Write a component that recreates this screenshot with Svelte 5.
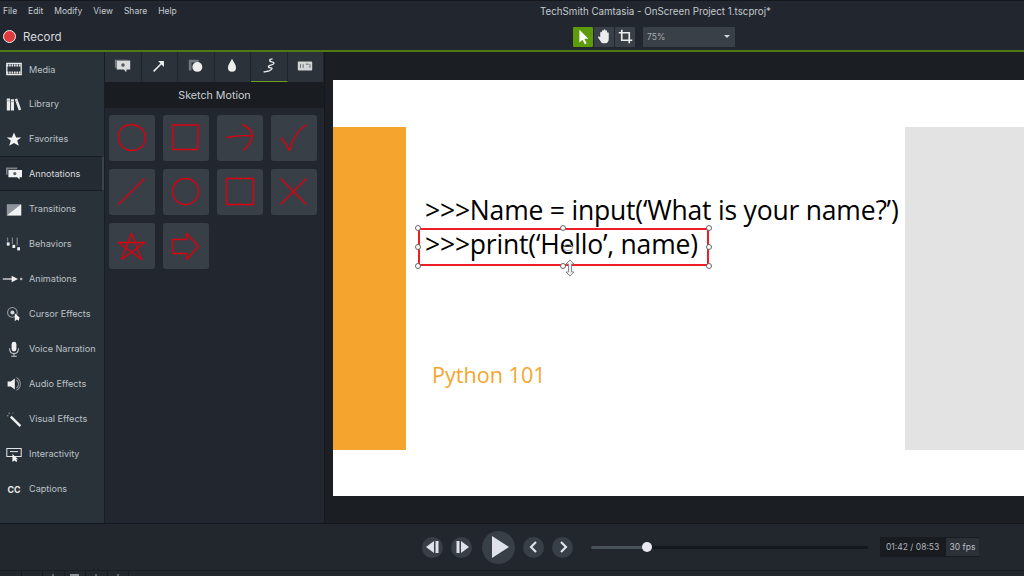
<script>
  const menu = ['File', 'Edit', 'Modify', 'View', 'Share', 'Help'];
  const side = [
    ['Media', 'media'], ['Library', 'library'], ['Favorites', 'star'], ['Annotations', 'annot'],
    ['Transitions', 'trans'], ['Behaviors', 'behav'], ['Animations', 'anim'], ['Cursor Effects', 'cursor'],
    ['Voice Narration', 'mic'], ['Audio Effects', 'audio'], ['Visual Effects', 'wand'], ['Interactivity', 'inter'], ['Captions', 'cc']
  ];
  const tabs = ['annot', 'arrow', 'shape', 'drop', 'sketch', 'key'];
  const tiles = [
    'M15 6C9 7 5.500 12 5.500 18c0 8 6 13.500 13 13.500 8 0 14-5 14-13 0-7-6-12-13-13-1 0-3 0-4 1',
    'M5.500 6H31.500L30.500 30.500H6Z',
    'M5.500 18.500C13 17 22 16 30.500 17M21.500 5.500C27 8 31 12 31.500 17 31 23 26 28 22.500 31.500',
    'M5.500 18.500C9 22 12 26 14.500 31.500 17 21 23 11 31.500 5.500',
    'M5.500 31.500L31.500 5.500',
    'M31.500 18.500A13 13 0 1 1 5.500 18.500A13 13 0 1 1 31.500 18.500Z',
    'M5.500 5.500H32.500V31.500H5.500Z',
    'M5.500 5.500L31.500 31.500M31.500 5.500L5.500 31.500',
    'M8.500 32.500L18.500 6.500L28.500 32.500L5.500 15.500H32L8.500 32.500',
    'M5.500 12.500H19.500V6.500L31.500 19.500L19.500 32.500V26.500H5.500Z'
  ];
  const stripMarks = [0, 0, 1, 2, 1, 1];
</script>

{#snippet icon(n)}
  <svg class="ico" viewBox="0 0 24 20">
    {#if n === 'media'}
      <path d="M3 3H21V17H3Z" fill="none" stroke="#e8eaec" stroke-width="1.600"/><path d="M3 5.500H21M3 14.500H21" stroke="#e8eaec" stroke-width="2.600" stroke-dasharray="2 1"/>
    {:else if n === 'library'}
      <path d="M3 3H7V18H3ZM8 4H12V18H8ZM13 4L16 3L21 17L18 18Z" fill="#e8eaec"/><path d="M3 6H7M8 7H12M13.500 7L16.500 6" stroke="#8f959b" stroke-width="1"/>
    {:else if n === 'star'}
      <path d="M12 2L14.600 8H21L16 12L18 18.500L12 15L6 18.500L8 12L3 8H9.400Z" fill="#f2f3f4"/>
    {:else if n === 'annot'}
      <path d="M2 2H16V4H4V11H2Z" fill="#7b8288"/><path d="M5 5H22V14H19V17L16 14H5Z" fill="#f0f1f2"/><circle cx="13" cy="9.500" r="2" fill="#5a6168"/>
    {:else if n === 'trans'}
      <path d="M3 4H21V18H3Z" fill="#8f959b"/><path d="M3 18L21 4V18Z" fill="#f0f1f2"/>
    {:else if n === 'behav'}
      <path d="M4 2V7M10 2V10M16 2V12" stroke="#7a828a" stroke-width="1.500"/><rect x="3" y="8" width="3.500" height="4" fill="#eee"/><rect x="10" y="11" width="3.500" height="4" fill="#eee"/><rect x="16" y="14" width="3.500" height="4" fill="#eee"/>
    {:else if n === 'anim'}
      <path d="M-2 10H11" stroke="#eee" stroke-width="1.500"/><path d="M9 6L17 10L9 14Z" fill="#eee"/><circle cx="21" cy="10" r="1.600" fill="#b8bcc0"/>
    {:else if n === 'cursor'}
      <circle cx="10" cy="8" r="6" fill="none" stroke="#9aa0a6" stroke-width="1.300"/><circle cx="10" cy="8" r="2.500" fill="#d5d7d9"/><path d="M13 9L13 19L15.500 17L18 18.500L18.500 16L19 14.500Z" fill="#f0f1f2"/>
    {:else if n === 'mic'}
      <rect x="9" y="1" width="6" height="12" rx="3" fill="#f0f1f2"/><path d="M6.500 9C6.500 18 17.500 18 17.500 9M12 15V19M8.500 19H15.500" fill="none" stroke="#c5c8cb" stroke-width="1.300"/>
    {:else if n === 'audio'}
      <path d="M4 7H8L13 3V17L8 13H4Z" fill="#f0f1f2"/><path d="M15 5A6 6 0 0 1 15 15M15 2A9 9 0 0 1 15 18" fill="none" stroke="#8f959b" stroke-width="1.300"/>
    {:else if n === 'wand'}
      <path d="M8 7L20 19" stroke="#f0f1f2" stroke-width="3"/><path d="M6 2V4M11 2L10 3M3 6H5" stroke="#b8bcc0" stroke-width="1"/>
    {:else if n === 'inter'}
      <path d="M3 3H21V13H3Z" fill="none" stroke="#e0e2e4" stroke-width="1.300"/><path d="M7 7H17" stroke="#e0e2e4" stroke-width="1.300"/><path d="M10 10L10 20L12.500 18L15 20L16 18.500L14.500 16.500H17Z" fill="#f5f5f5"/>
    {:else if n === 'cc'}
      <text x="12" y="15" text-anchor="middle" class="cc">CC</text>
    {/if}
  </svg>
{/snippet}

{#snippet tab(n)}
  <svg class="tabico" viewBox="0 0 20 20">
    {#if n === 'annot'}
      <path d="M3 4H18V14H14L13.500 17L11 14H3Z" fill="#d9dbdd"/><path d="M1 3H15V4H3V12H1Z" fill="#7b8288"/><circle cx="10" cy="9" r="2" fill="#565d63"/>
    {:else if n === 'arrow'}
      <path d="M4 16L13 7" stroke="#eceded" stroke-width="1.700"/><path d="M9 4.500H15.500V11Z" fill="#eceded"/>
    {:else if n === 'shape'}
      <path d="M2 3H13V6H5V15H2Z" fill="#737a80"/><circle cx="11.500" cy="11" r="5.500" fill="#eceded"/>
    {:else if n === 'drop'}
      <path d="M10 2C12 6 14.500 8.500 14.500 12A4.500 4.500 0 0 1 5.500 12C5.500 8.500 8 6 10 2Z" fill="#eceded"/>
    {:else if n === 'sketch'}
      <path d="M14 2C10 2 10 5 13 5.500C17 6 16 8 12 9C8 10 9 12 12 12C14 12 14 14 10 15.500C7 16.500 5 16 4 17" fill="none" stroke="#eceded" stroke-width="1.500"/>
    {:else if n === 'key'}
      <rect x="2" y="5" width="16" height="10" rx="1" fill="#d2d4d6"/><path d="M5 8V12M8 8V12M11 8H14M15.500 8V12" stroke="#596067" stroke-width="1"/>
    {/if}
  </svg>
{/snippet}

<div class="app">
  <header class="head">
    <div class="menurow">
      <nav class="menu">
        {#each menu as m}<span>{m}</span>{/each}
      </nav>
      <div class="title">TechSmith Camtasia - OnScreen Project 1.tscproj*</div>
    </div>
    <div class="toolrow">
      <div class="record"><i class="dot"></i><span>Record</span></div>
      <div class="tools">
        <button class="tool on" aria-label="Select">
          <svg viewBox="0 0 20 20" width="18" height="18"><path d="M6 2V16L9.500 13L12 18L14 17L11.500 12H16Z" fill="#fff"/></svg>
        </button>
        <button class="tool" aria-label="Pan">
          <svg viewBox="0 0 20 20" width="17" height="17"><path d="M5 10V5.500A1 1 0 0 1 7 5.500V9V3.500A1 1 0 0 1 9 3.500V9V2.500A1 1 0 0 1 11 2.500V9V3.500A1 1 0 0 1 13 3.500V10V6A1 1 0 0 1 15 6V13C15 16 13.500 18 11 18H9C7 18 6 17 5 15L2.500 11.500C2 10 3.500 9 5 11Z" fill="#eceded"/></svg>
        </button>
        <button class="tool" aria-label="Crop">
          <svg viewBox="0 0 20 20" width="15" height="15"><path d="M5 1V15H19M1 5H15V19" fill="none" stroke="#eceded" stroke-width="2.200"/></svg>
        </button>
        <div class="zoomsel"><span>75%</span><i class="caret"></i></div>
      </div>
    </div>
  </header>

  <main class="body">
    <aside class="side">
      {#each side as [label, n]}
        <div class="item" class:active={n === 'annot'}>
          {@render icon(n)}
          <span>{label}</span>
        </div>
      {/each}
    </aside>

    <section class="panel">
      <div class="tabs">
        {#each tabs as t}
          <div class="tab" class:current={t === 'sketch'}>{@render tab(t)}</div>
        {/each}
      </div>
      <div class="ptitle">Sketch Motion</div>
      <div class="grid">
        {#each tiles as d}
          <div class="tile">
            <svg viewBox="0 0 38 38" width="38" height="38"><path {d} fill="none" stroke="#dc0010" stroke-width="1.400" stroke-linejoin="round"/></svg>
          </div>
        {/each}
      </div>
    </section>

    <section class="stage">
      <div class="slide">
        <div class="bar orange"></div>
        <div class="bar grey"></div>
        <div class="line l1">&gt;&gt;&gt;Name = input(‘What is your name?’)</div>
        <div class="line l2">&gt;&gt;&gt;print(‘Hello’, name)</div>
        <div class="py">Python 101</div>
        <div class="selection">
          {#each ['tl','tm','tr','ml','mr','bl','bm','br'] as h}<i class="h {h}"></i>{/each}
          <i class="pivot"></i>
        </div>
        <svg class="move" viewBox="0 0 12 18" width="12" height="18"><path d="M6 1L10 5H7.500V13H10L6 17L2 13H4.500V5H2Z" fill="#f2f2f2" stroke="#8a8a8a" stroke-width="1"/></svg>
      </div>
    </section>
  </main>

  <footer class="foot">
    <div class="transport">
      <button class="rb" aria-label="Previous"><svg viewBox="0 0 20 20" width="20" height="20"><path d="M11 4V16L3 10Z" fill="#dfe2e8"/><path d="M12.500 4H15.500V16H12.500Z" fill="#dfe2e8"/></svg></button>
      <button class="rb" aria-label="Next"><svg viewBox="0 0 20 20" width="20" height="20"><path d="M9 4V16L17 10Z" fill="#dfe2e8"/><path d="M4.500 4H7.500V16H4.500Z" fill="#dfe2e8"/></svg></button>
      <button class="rb play" aria-label="Play"><svg viewBox="0 0 32 32" width="32" height="32"><path d="M9 5V27L26 16Z" fill="#dfe2e8"/></svg></button>
      <button class="rb" aria-label="Back"><svg viewBox="0 0 20 20" width="20" height="20"><path d="M12 5L7 10L12 15" fill="none" stroke="#dfe2e8" stroke-width="2.200"/></svg></button>
      <button class="rb" aria-label="Forward"><svg viewBox="0 0 20 20" width="20" height="20"><path d="M8 5L13 10L8 15" fill="none" stroke="#dfe2e8" stroke-width="2.200"/></svg></button>
    </div>
    <div class="track"><div class="fill"></div><i class="knob"></i></div>
    <div class="time"><span class="clock">01:42 / 08:53</span><span class="fps">30 fps</span></div>
  </footer>
  <div class="strip">
    {#each stripMarks as m}
      <span class="cell"><i class="mark" class:one={m === 1} class:two={m === 2}></i></span>
    {/each}
  </div>
</div>

<style>
  :global(body) { margin: 0; background: #22272e; }
  .app { width: 1024px; height: 576px; overflow: hidden; display: flex; flex-direction: column; background: #22272e; font-family: "Inter", "Open Sans", sans-serif; color: #c9ced3; }
  .head { height: 52px; flex: none; box-sizing: border-box; border-top: 1px solid #14171b; border-bottom: 2px solid #4f7a18; background: #22272f; display: flex; flex-direction: column; }
  .menurow { height: 22px; box-sizing: border-box; padding: 0 0 2px 3px; position: relative; display: flex; align-items: center; }
  .menu { display: flex; gap: 11px; font-size: 8.500px; color: #c6cbd0; }
  .title { position: absolute; left: 0; right: 0; padding-left: 287px; text-align: center; font-size: 9.750px; color: #c4c9ce; }
  .toolrow { flex: 1; display: flex; align-items: center; padding-left: 3px; }
  .record { width: 570px; display: flex; align-items: center; gap: 7px; font-size: 11.500px; color: #d8dbde; }
  .dot { width: 13px; height: 13px; border-radius: 50%; background: #e23a3c; border: 1px solid #f0f0f0; box-sizing: border-box; }
  .tools { display: flex; align-items: center; gap: 1px; }
  .tool { width: 20px; height: 20px; padding: 0; border: 0; border-radius: 1px; background: #3a4047; display: flex; align-items: center; justify-content: center; }
  .tool.on { background: #5d9a0c; }
  .zoomsel { margin-left: 7px; width: 92px; height: 20px; box-sizing: border-box; padding: 0 5px 0 4px; background: #3a4047; border-radius: 1px; display: flex; align-items: center; justify-content: space-between; font-size: 8.500px; color: #a8adb2; }
  .caret { border: 3px solid transparent; border-top: 3.500px solid #d4d6d8; border-bottom: 0; }

  .body { flex: 1; min-height: 0; display: flex; }
  .side { width: 104px; flex: none; background: #2a3239; border-right: 1px solid #1a1e23; }
  .item { height: 35px; display: flex; align-items: center; gap: 5px; padding-left: 4px; font-size: 9.100px; color: #bcc2c8; box-sizing: border-box; }
  .item:first-child { height: 34px; }
  .item.active { background: #252b32; border-top: 1px solid #181b20; border-bottom: 1px solid #181b20; border-right: 2px solid #3c434a; color: #d6dade; }
  .ico { width: 20px; height: 16px; flex: none; overflow: visible; }
  .cc { font: 700 11px "Inter", sans-serif; fill: #eceded; }

  .panel { width: 219px; flex: none; background: #22272f; }
  .tabs { height: 30px; display: flex; background: #2b323a; }
  .tab { flex: 1; box-sizing: border-box; border-right: 1px solid #20252b; display: flex; align-items: center; justify-content: center; padding-bottom: 2px; }
  .tab.current { border-bottom: 1px solid #6aa120; }
  .tabico { width: 18px; height: 18px; }
  .ptitle { height: 26px; background: #191d22; display: flex; align-items: center; justify-content: center; font-size: 10.700px; color: #c9ced3; }
  .grid { display: grid; grid-template-columns: repeat(4, 46px); grid-auto-rows: 46px; gap: 8px; padding: 7px 0 0 4px; }
  .tile { background: #383f46; border-radius: 3px; display: flex; align-items: center; justify-content: center; }

  .stage { flex: 1; background: #1b1f24; border-left: 1px solid #14171b; padding: 28px 0 0 8px; min-width: 0; overflow: hidden; }
  .slide { position: relative; width: 700px; height: 416px; background: #fff; font-family: "Open Sans", sans-serif; color: #000; }
  .bar { position: absolute; top: 47px; height: 323px; background: #f5a52d; }
  .orange { left: 0; width: 73px; }
  .grey { left: 572px; width: 128px; background: #e3e3e3; }
  .line { position: absolute; left: 92px; font-size: 26.500px; line-height: 34px; letter-spacing: -0.200px; white-space: nowrap; }
  .l1 { top: 113px; }
  .l2 { top: 147px; }
  .py { position: absolute; left: 99px; top: 280px; font-size: 21.600px; line-height: 30px; color: #f5a52d; }
  .selection { position: absolute; left: 85px; top: 148px; width: 291px; height: 38px; box-sizing: border-box; border: 2px solid #ee1c25; }
  .h { position: absolute; width: 6px; height: 6px; border-radius: 50%; background: #fff; border: 1px solid #666; box-sizing: border-box; }
  .tl { left: -5px; top: -5px; } .tm { left: 140px; top: -5px; } .tr { right: -5px; top: -5px; }
  .ml { left: -5px; top: 14px; } .mr { right: -5px; top: 14px; }
  .bl { left: -5px; bottom: -5px; } .bm { left: 140px; bottom: -5px; } .br { right: -5px; bottom: -5px; }
  .pivot { position: absolute; left: 143px; top: 14px; width: 8px; height: 5px; border: 1px solid #aaa; border-radius: 50%; }
  .move { position: absolute; left: 231px; top: 179px; }

  .foot { height: 48px; flex: none; box-sizing: border-box; border-top: 1px solid #14171b; border-bottom: 1px solid #1a1d22; background: #22272e; display: flex; align-items: center; }
  .transport { margin-left: 422px; display: flex; align-items: center; gap: 8px; width: 169px; }
  .rb { width: 21px; height: 21px; padding: 0; border: 0; border-radius: 50%; background: #383f46; display: flex; align-items: center; justify-content: center; flex: none; }
  .play { width: 33px; height: 33px; margin: 0 0 0 2px; }
  .track { position: relative; width: 277px; height: 3px; background: #14171b; border-radius: 2px; }
  .fill { width: 56px; height: 3px; background: #4a5259; border-radius: 2px; }
  .knob { position: absolute; left: 51px; top: -3.500px; width: 10px; height: 10px; border-radius: 50%; background: #e9eaf0; }
  .time { margin-left: 12px; height: 20px; width: 99px; display: flex; align-items: center; background: #181c21; font-size: 8.500px; color: #aeb4ba; box-sizing: border-box; }
  .clock { padding-left: 6px; }
  .fps { margin-left: auto; height: 18px; width: 33px; background: #2c3138; color: #b9bec3; display: flex; align-items: center; justify-content: center; }
  .strip { height: 5px; flex: none; background: #22272e; display: flex; padding-left: 0; }
  .cell { width: 20.500px; border-right: 1px solid #171a1f; display: flex; align-items: flex-end; justify-content: center; }
  .mark { width: 2px; height: 2px; background: transparent; }
  .mark.one { background: #5e656c; }
  .mark.two { width: 9px; background: #8b9096; }
</style>
